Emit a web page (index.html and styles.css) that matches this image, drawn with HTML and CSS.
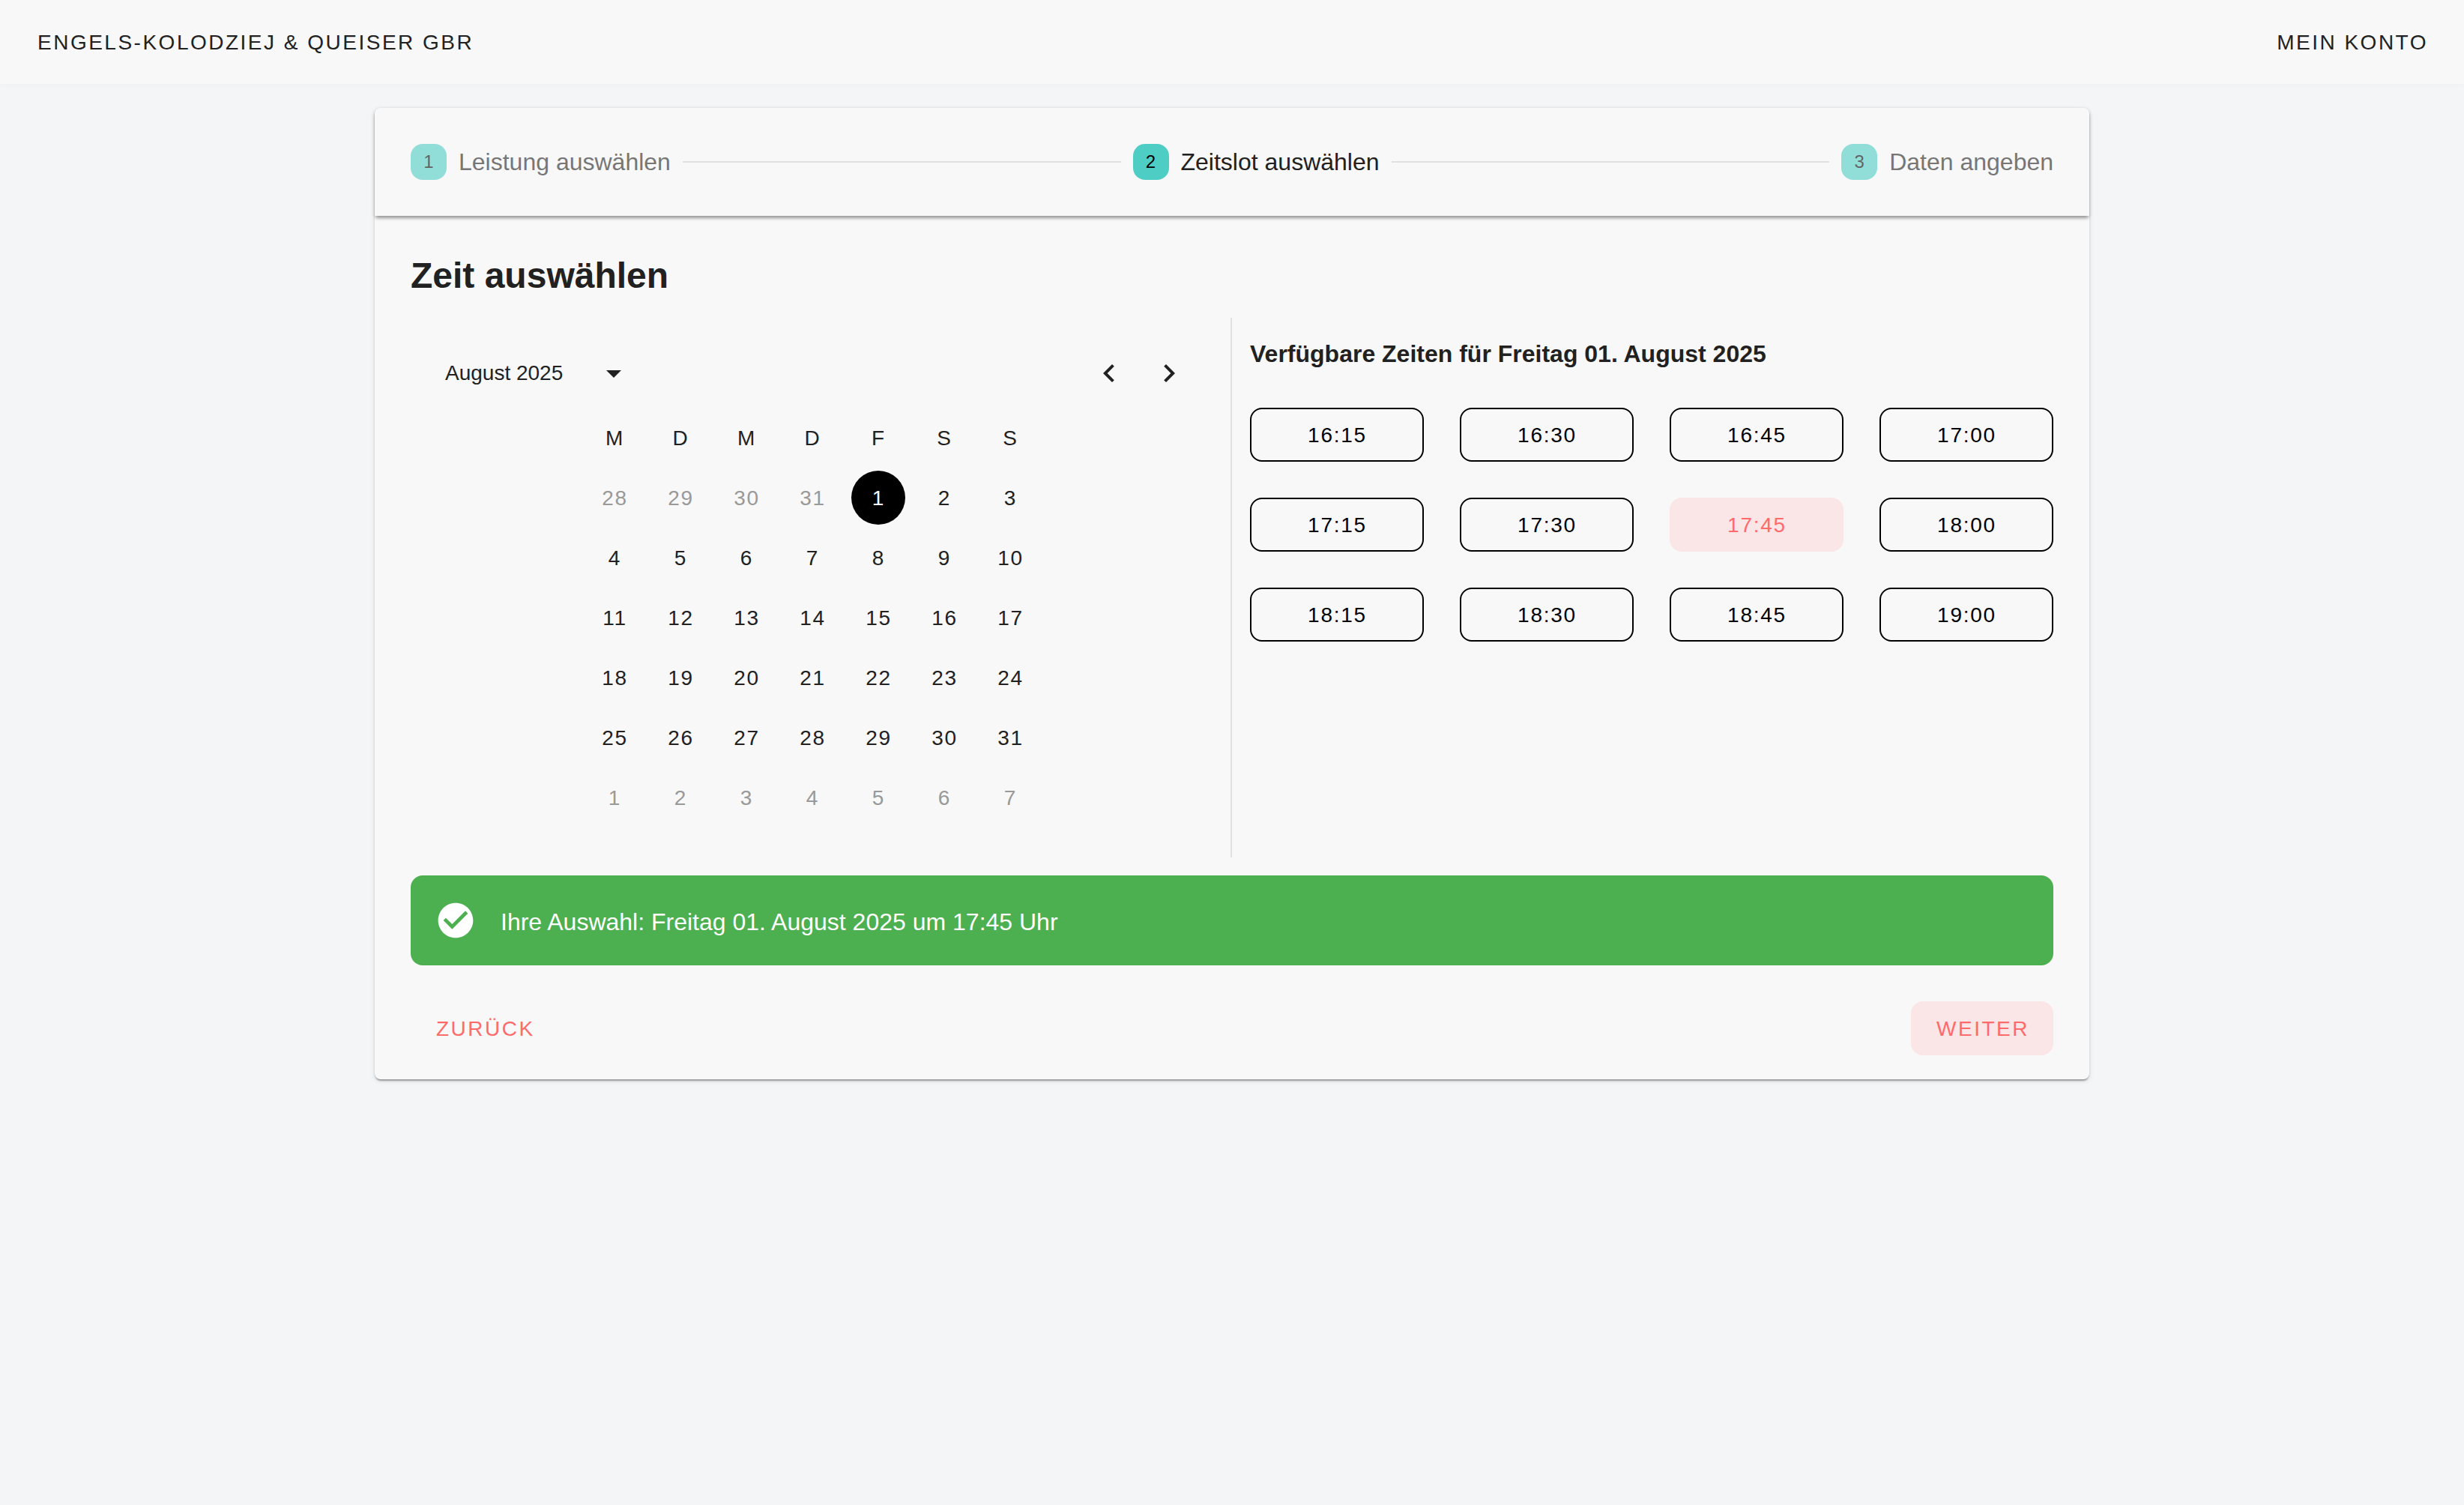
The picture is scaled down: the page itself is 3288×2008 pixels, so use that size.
FILE: index.html
```html
<!DOCTYPE html>
<html lang="de">
<head>
<meta charset="utf-8">
<title>Zeit auswählen</title>
<link rel="stylesheet" href="styles.css">
</head>
<body>
<header class="topbar">
  <span class="brand">ENGELS-KOLODZIEJ &amp; QUEISER GBR</span>
  <span class="brand">MEIN KONTO</span>
</header>
<main class="page">
  <section class="card">
    <nav class="stepper">
      <div class="step inactive"><span class="step-icon">1</span><span>Leistung auswählen</span></div>
      <div class="connector"></div>
      <div class="step"><span class="step-icon">2</span><span>Zeitslot auswählen</span></div>
      <div class="connector"></div>
      <div class="step inactive"><span class="step-icon">3</span><span>Daten angeben</span></div>
    </nav>
    <div class="content">
      <h1 class="title">Zeit auswählen</h1>
      <div class="picker">
        <div class="calendar">
          <div class="cal-head">
            <span class="cal-month">August 2025</span>
            <svg class="icon cal-drop" viewBox="0 0 24 24"><path d="M7 10l5 5 5-5z"/></svg>
            <div class="cal-nav">
              <span class="nav-btn"><svg class="icon" viewBox="0 0 24 24"><path d="M15.41 16.59 10.83 12l4.58-4.59L14 6l-6 6 6 6z"/></svg></span>
              <span class="nav-btn"><svg class="icon" viewBox="0 0 24 24"><path d="M8.59 16.59 13.17 12 8.59 7.41 10 6l6 6-6 6z"/></svg></span>
            </div>
          </div>
          <div class="cal-grid">
            <span class="wd">M</span><span class="wd">D</span><span class="wd">M</span><span class="wd">D</span><span class="wd">F</span><span class="wd">S</span><span class="wd">S</span>
            <span class="day out">28</span><span class="day out">29</span><span class="day out">30</span><span class="day out">31</span><span class="day sel">1</span><span class="day">2</span><span class="day">3</span>
            <span class="day">4</span><span class="day">5</span><span class="day">6</span><span class="day">7</span><span class="day">8</span><span class="day">9</span><span class="day">10</span>
            <span class="day">11</span><span class="day">12</span><span class="day">13</span><span class="day">14</span><span class="day">15</span><span class="day">16</span><span class="day">17</span>
            <span class="day">18</span><span class="day">19</span><span class="day">20</span><span class="day">21</span><span class="day">22</span><span class="day">23</span><span class="day">24</span>
            <span class="day">25</span><span class="day">26</span><span class="day">27</span><span class="day">28</span><span class="day">29</span><span class="day">30</span><span class="day">31</span>
            <span class="day out">1</span><span class="day out">2</span><span class="day out">3</span><span class="day out">4</span><span class="day out">5</span><span class="day out">6</span><span class="day out">7</span>
          </div>
        </div>
        <div class="slots">
          <h2 class="slots-title">Verfügbare Zeiten für Freitag 01. August 2025</h2>
          <div class="slot-grid">
            <button class="slot">16:15</button><button class="slot">16:30</button><button class="slot">16:45</button><button class="slot">17:00</button>
            <button class="slot">17:15</button><button class="slot">17:30</button><button class="slot active">17:45</button><button class="slot">18:00</button>
            <button class="slot">18:15</button><button class="slot">18:30</button><button class="slot">18:45</button><button class="slot">19:00</button>
          </div>
        </div>
      </div>
      <div class="alert">
        <svg class="alert-icon" viewBox="0 0 24 24"><path d="M12 2C6.48 2 2 6.48 2 12s4.48 10 10 10 10-4.48 10-10S17.52 2 12 2zm-2 15l-5-5 1.41-1.41L10 14.17l7.59-7.59L19 8l-9 9z"/></svg>
        <span class="alert-text">Ihre Auswahl: Freitag 01. August 2025 um 17:45 Uhr</span>
      </div>
      <div class="actions">
        <button class="action">ZURÜCK</button>
        <button class="action tinted">WEITER</button>
      </div>
    </div>
  </section>
</main>
</body>
</html>
```
FILE: styles.css
```css
* { box-sizing: border-box; }
html, body { margin: 0; height: 100%; }
body {
  background: #f4f5f7;
  color: #212121;
  font-family: "Liberation Sans", Arial, sans-serif;
  min-height: 2008px;
}
.topbar {
  height: 112px;
  padding: 1px 48px 0 50px;
  display: flex;
  align-items: center;
  justify-content: space-between;
  background: #f8f8f8;
  box-shadow: 0 2px 8px rgba(0, 0, 0, 0.02);
}
.brand {
  font-size: 28px;
  letter-spacing: 2.5px;
  color: #212121;
}
.page {
  padding-top: 32px;
  display: flex;
  justify-content: center;
}
.card {
  width: 2288px;
  height: 1296px;
  background: #f8f8f8;
  border-radius: 8px;
  box-shadow: 0 4px 2px -2px rgba(0, 0, 0, 0.2), 0 2px 2px 0 rgba(0, 0, 0, 0.14), 0 2px 6px 0 rgba(0, 0, 0, 0.12);
}
.stepper {
  height: 144px;
  padding: 0 48px;
  display: flex;
  align-items: center;
  background: #f8f8f8;
  border-radius: 8px 8px 0 0;
  box-shadow: 0 5px 4px -2px rgba(0, 0, 0, 0.28), 0 2px 4px 0 rgba(0, 0, 0, 0.12), 0 2px 6px 0 rgba(0, 0, 0, 0.08);
}
.step {
  display: flex;
  align-items: center;
  gap: 16px;
  font-size: 32px;
  color: #212121;
  white-space: nowrap;
}
.step.inactive { opacity: 0.6; }
.step-icon {
  width: 48px;
  height: 48px;
  border-radius: 16px;
  background: #4ecdc4;
  display: flex;
  align-items: center;
  justify-content: center;
  font-size: 24px;
  color: #000;
}
.connector {
  flex: 1;
  height: 2px;
  margin: 0 16px;
  background: #e0e0e0;
}
.content { padding: 48px 48px 0; }
.title {
  margin: 0 0 24px;
  font-size: 48px;
  line-height: 64px;
  font-weight: 700;
}
.picker {
  display: flex;
  height: 720px;
}
.calendar {
  width: 1096px;
  padding-top: 44px;
  border-right: 2px solid #e0e0e0;
}
.cal-head {
  height: 60px;
  margin-bottom: 16px;
  padding: 0 46px 0 46px;
  display: flex;
  align-items: center;
}
.cal-month { font-size: 28px; }
.icon { width: 48px; height: 48px; fill: #212121; display: block; }
.cal-drop { margin-left: 44px; }
.cal-nav { margin-left: auto; display: flex; gap: 8px; }
.nav-btn { width: 72px; height: 72px; display: flex; align-items: center; justify-content: center; }
.cal-grid {
  width: 600px;
  margin-left: 236px;
  display: grid;
  grid-template-columns: repeat(7, 72px);
  column-gap: 16px;
}
.wd, .day {
  display: flex;
  align-items: center;
  justify-content: center;
  padding: 2px 0 0 1px;
  font-size: 28px;
  letter-spacing: 1.75px;
}
.wd { height: 80px; color: #212121; }
.day { height: 72px; margin: 4px 0; border-radius: 50%; color: #212121; }
.day.out { color: #999; }
.day.sel { background: #000; color: #fff; }
.slots { flex: 1; padding: 24px 0 0 24px; }
.slots-title {
  margin: 0 0 48px;
  font-size: 32px;
  line-height: 48px;
  font-weight: 700;
}
.slot-grid {
  display: grid;
  grid-template-columns: repeat(4, 232px);
  gap: 48px;
}
.slot {
  height: 72px;
  border: 2px solid #000;
  border-radius: 16px;
  background: transparent;
  font: 28px "Liberation Sans", Arial, sans-serif;
  letter-spacing: 1.75px;
  color: #000;
  padding: 2px 0 0 1px;
}
.slot.active {
  border-color: transparent;
  background: #fbe6e7;
  color: #ff6b6b;
}
.alert {
  margin-top: 24px;
  height: 120px;
  padding: 0 32px;
  display: flex;
  align-items: center;
  gap: 32px;
  background: #4caf50;
  border-radius: 16px;
  color: #fff;
  font-size: 32px;
}
.alert-text { padding-top: 4px; }
.alert-icon { width: 56px; height: 56px; fill: #fff; flex: none; }
.actions {
  margin-top: 48px;
  display: flex;
  justify-content: space-between;
}
.action {
  height: 72px;
  padding: 2px 32px 0 34px;
  border: 0;
  border-radius: 16px;
  background: transparent;
  font: 28px "Liberation Sans", Arial, sans-serif;
  letter-spacing: 2.5px;
  color: #ff6b6b;
}
.action.tinted { background: #fbe6e7; }
```
